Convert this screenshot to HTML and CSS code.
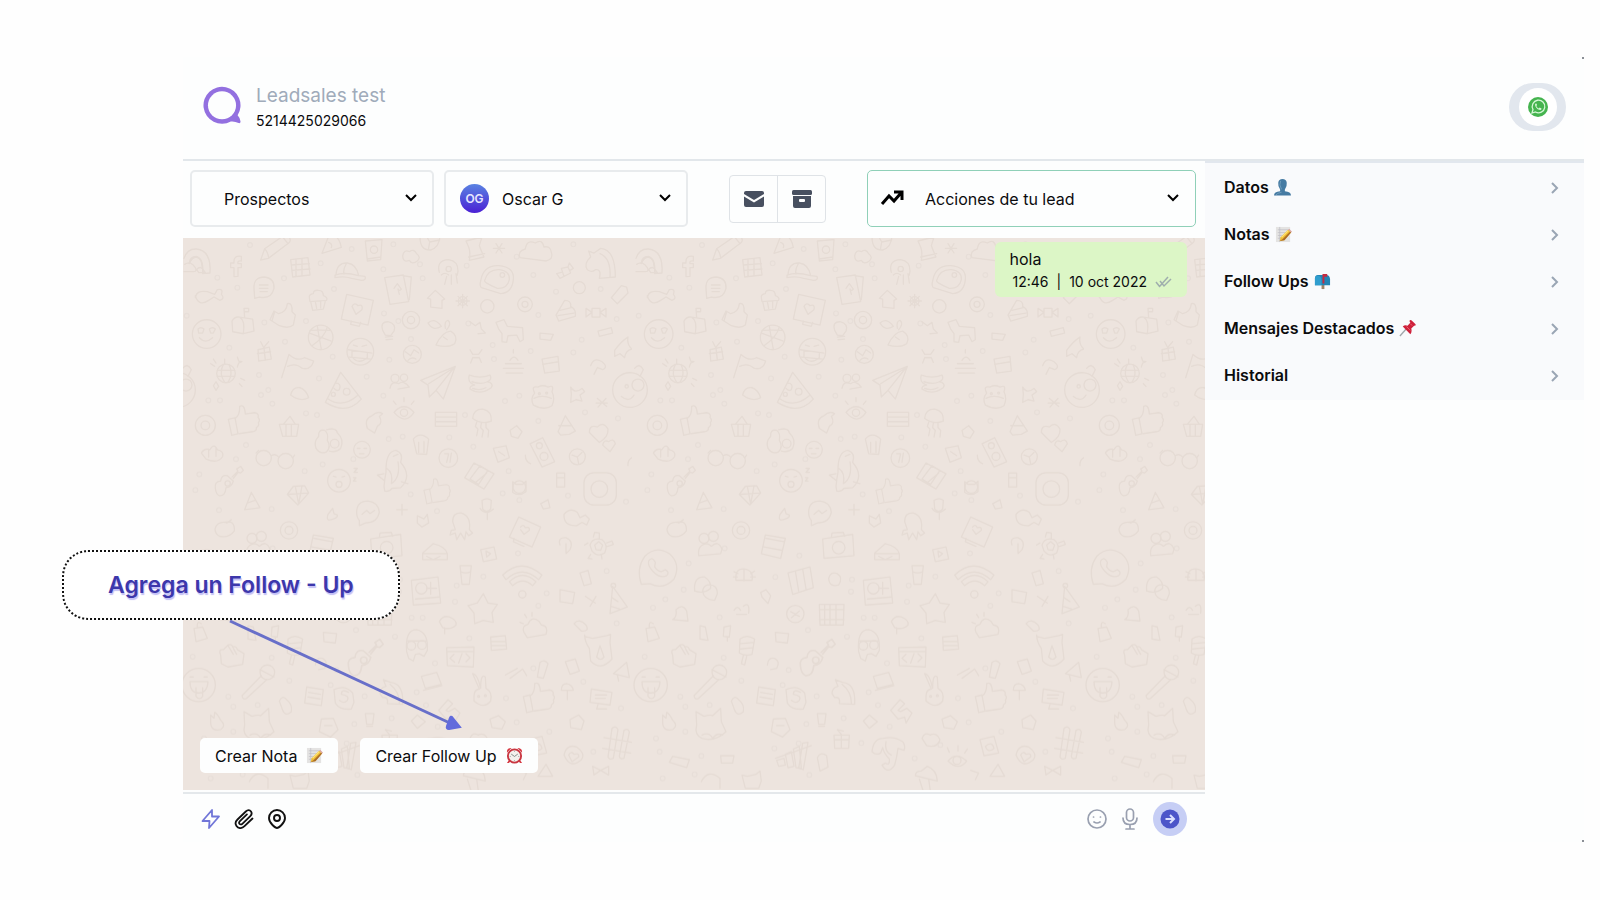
FILE: index.html
```html
<!DOCTYPE html>
<html lang="es">
<head>
<meta charset="utf-8">
<title>Leadsales</title>
<link rel="stylesheet" href="styles.css">
</head>
<body>
<svg class="defs" aria-hidden="true">
  <symbol id="chevron-down" viewBox="0 0 14 10"><path d="M2 2l5 5 5-5"/></symbol>
  <symbol id="chevron-right" viewBox="0 0 10 14"><path d="M2 2l5 5-5 5"/></symbol>
  <symbol id="memo" viewBox="0 0 18 18">
    <path d="M1 1h15v16H1z" fill="#e4e3e2"/>
    <path d="M3 4h11M3 7h10M3 10h6M3 13h4M5 1v16" stroke="#bcbcc2" stroke-width=".7"/>
    <path d="M5 16l1-4 8-8 3 3-7 8z" fill="#edbb32"/>
    <path d="M5 16l5-1 7-8-1-1-8 8z" fill="#a96b29"/>
    <path d="M14 4l1-1 3 3-1 1z" fill="#d9a19b"/>
    <path d="M7 12l7-7" stroke="#ffe374" stroke-width="1.3"/>
  </symbol>
</svg>
<div class="app">
  <header class="header">
    <svg class="logo" viewBox="0 0 40 40" aria-hidden="true"><path d="M35.500 30a19 19 0 1 0-7 6.500q4-.5 8 1.500 2 .5 2-1.500-.5-4-3-6.500z" fill="#9370e0"/><circle cx="19.500" cy="19.800" r="14.400" fill="#fdfefe"/></svg>
    <div class="contact">
      <h1 class="contact-name">Leadsales test</h1>
      <p class="contact-phone">5214425029066</p>
    </div>
    <button class="channel" type="button" aria-label="WhatsApp">
      <span class="channel-disc">
        <svg width="20" height="20" viewBox="0 0 20 20" aria-hidden="true"><circle cx="10" cy="10" r="10" fill="#45b44f"/><path d="M4 16l1-3.500A6.300 6.300 0 1 1 7.500 15z" fill="none" stroke="#d5f7d6" stroke-width="1.300"/><path d="M7.500 6.500q-1 1 0 3 2 3.500 5 3.500 1-.5 1-1.500l-1.800-1-1 1Q9 10.700 8.300 9l.8-1-.7-1.500z" fill="#d5f7d6"/></svg>
      </span>
    </button>
  </header>

  <div class="body">
    <main class="conversation">
      <div class="toolbar">
        <div class="picker">
          <select class="picker-select" aria-label="Etapa"><option>Prospectos</option></select>
          <svg class="picker-chevron"><use href="#chevron-down"/></svg>
        </div>
        <div class="picker">
          <select class="picker-select picker-select-agent" aria-label="Agente"><option>Oscar G</option></select>
          <span class="avatar">OG</span>
          <svg class="picker-chevron"><use href="#chevron-down"/></svg>
        </div>
        <div class="button-group">
          <button class="group-button" type="button" aria-label="Marcar como no leído"><svg width="20" height="16" viewBox="0 0 20 16"><path d="M2 0h16q2 0 2 2v1l-10 6L0 3V2q0-2 2-2z"/><path d="M0 5.500l10 6 10-6V14q0 2-2 2H2q-2 0-2-2z"/></svg></button>
          <button class="group-button" type="button" aria-label="Archivar"><svg width="20" height="18" viewBox="0 0 20 18"><path d="M1.500 0h17Q20 0 20 1.500v2Q20 5 18.500 5h-17Q0 5 0 3.500v-2Q0 0 1.500 0z"/><path fill-rule="evenodd" d="M1 6h18v10q0 2-2 2H3q-2 0-2-2zM8 9q-1 0-1 1v1q0 1 1 1h4q1 0 1-1v-1q0-1-1-1z"/></svg></button>
        </div>
        <div class="picker picker-actions">
          <select class="picker-select picker-select-actions" aria-label="Acciones"><option>Acciones de tu lead</option></select>
          <svg class="trend" viewBox="0 0 24 16" fill="none" stroke="#000" stroke-width="3" aria-hidden="true"><path d="M2 14l7-8 5 5 7-8M14 2h8v8"/></svg>
          <svg class="picker-chevron"><use href="#chevron-down"/></svg>
        </div>
      </div>

      <section class="chat">
        <svg class="wallpaper" aria-hidden="true">
          <defs>
            <path id="d-thumb" d="M-45-5l20-5 9 48-19 5q-4-23-10-48zM-25-7q15-10 14-37 15-8 17 23l28-4q14 2 10 14 8 8 1 16 4 9-6 15 2 9-11 12l-40 6"/>
            <path id="dots" d="M210 30h0M112 128h0M172 158h0M312 130h0M422 85h0M462 162h0M515 42h0M610 103h0M640 28h0M728 130h0M720 88h0M860 92h0M1010 65h0M1060 120h0M1128 170h0M1262 162h0M1310 252h0M1180 28h0M20 242h0M148 338h0M253 262h0M378 258h0M315 320h0M612 235h0M655 258h0M693 312h0M938 330h0M1052 348h0M1075 240h0M1205 314h0M1180 352h0M865 265h0M942 372h0M458 365h0M417 430h0M560 425h0M628 374h0M610 482h0M237 420h0M243 480h0M277 506h0M85 496h0M120 496h0M265 465h0M378 535h0M411 540h0M855 540h0M975 498h0M1018 482h0M1075 558h0M1215 532h0M1314 550h0M626 612h0M668 605h0M808 607h0M880 635h0M168 672h0M198 630h0M374 708h0M428 688h0M58 718h0M46 765h0M117 825h0M275 822h0M692 778h0M771 828h0M968 775h0M1018 795h0M1338 800h0M1164 782h0M986 708h0M520 672h0M170 985h0M278 940h0M502 962h0M155 1064h0M100 1093h0M63 1118h0M263 1147h0M430 1026h0M660 1034h0M657 1070h0M695 1148h0M728 1148h0M830 1052h0M825 1100h0M910 1025h0M1014 955h0M1100 1075h0M1075 1112h0M1310 1165h0M1280 1008h0M645 1205h0M528 1185h0M38 1265h0M275 1268h0M868 1210h0M765 1285h0M470 1305h0M328 1337h0M452 1350h0M145 1385h0M233 1410h0M160 1415h0M554 1384h0M710 1372h0M978 1390h0M738 1411h0M523 1467h0M635 1450h0M773 1475h0M1010 1462h0M1108 1490h0M1323 1420h0M688 1524h0M160 1490h0M72 1510h0M83 1550h0M208 1563h0M427 1540h0M500 1525h0M848 1570h0M925 1530h0M92 1630h0M188 1618h0M532 1620h0M1240 1550h0M1210 1340h0M1060 1300h0"/>
            <pattern id="doodles" width="1356" height="1700" patternUnits="userSpaceOnUse" patternTransform="translate(-3 -3) scale(.3333333)">
              <g class="doodle">
                <use href="#dots" class="dot-rim"/><use href="#dots" class="dot-core"/>
                <path d="M12 70Q22 40 50 42q44 5 40 72l-22 2Q72 72 50 64q-22 0-22 22M28 86q8-20 22-20 16 6 16 28M14 88q18-12 32 10 6 12-6 12H12M50 103q12-12 20 2l6 8H56z"/>
                <path d="M162 125V98h-10V84h10q-2-24 22-20v14q-12-2-10 8h10v12h-10v26zM242 75l12-34 58-40q10-4 17 8 5 10-4 16L265 70zM254 41q10 10 12 28M308 6l16 20M332 74l52-6 6 52-52 6zM348 74v50M366 72v48M334 90l54-4M336 106l54-4"/>
                <path d="M426 55l24-62q28 10 34 44zM446 22q12 4 8 16M556 18l50-4-4 60-40 4zM562 72l40-6M720 5q0 42 32 40 26-8 28-42M735-5l14 26 30-6M749 21l-4 24M668 62q4-20 20-12 14-10 22 6 14 10 2 22-16 12-24-2-20 8-20-14zM468 120q2-38 34-36 28 4 34 38M465 120q30-10 70 2l20 2q4 12-10 12l-30-6q-24-8-50-2zM500 84q-12 20-8 34"/>
                <circle cx="582" cy="44" r="11"/>
                <path d="M858 18l48-12-8 26q6 16 14 34l-44 10q4-24-2-40zM866 66l48-10M1020 68q-8-20 16-26 4-30 30-18 20-14 26 12 20-4 22 16 8 20-16 26zM778 112q-10-36 28-38 28 4 28 34l-2 12M784 120q10-10 22 0M800 124l-6 24M814 120v28M828 116l4 28M940 40h34M948 26l18 28M966 26l-18 28"/><circle cx="806" cy="102" r="8"/>
                <path d="M902 138q8-48 54-46 48 4 44 42-4 40-38 42l-58-18q-6-6-2-20zM914 136q10-34 44-32 32 4 30 30-6 28-36 26-42-18-38-24z"/><circle cx="967" cy="120" r="7"/>
                <path d="M1222 104q-12-18 10-38l-6-18 16 6 20-14q44 4 44 86l-48 4q8-28-12-26-10 10-24 0zM1260 56q34 14 30 72M1294 188l30-36 16 4 4 18-32 32zM1144 100l20-4 8 18-20 10zM1164 96l4-12 12 16-10 6M1144 112l-14 4 10 14 12-6"/>
                <path d="M222 160q-2-34 32-34 30 4 28 34-8 34-44 26l-14 4zM238 150h26M238 160h26M240 170h22M388 188q-2-10 12-12 0-12 16-10 14 0 14 16 14 4 10 14l-50 4zM392 200l6 26 32-4 6-24M406 200l4 20M422 198v20M614 128l56-8 16 80-56 8zM668 122l26 4-6 68M642 160l10-14 12 16q-6 8-10 0l4 16M500 178l80 18-16 74-80-18zM514 258l-2 10 26 6 4-12"/>
                <path d="M516 214q8-14 18-2 16-6 12 12l-18 14zM46 188q4-24 36-18l22 8 8-14q20-4 12 14 12 12-4 18l-18-10-16 10q-30 20-40-14zM158 290l-2-32q8-14 22-12l40 6 4 36-32 8zM180 248q16 8 10 48M194 248l-2-28h14v10h-12M270 254l12-26 14 8q24-6 26-30 16-4 14 24l10 10-6 30q-14 12-42 2zM284 230l-8 28M742 190l24-24 28 26-8 4v24l-34-4v-24z"/>
                <circle cx="80" cy="297" r="43"/><path d="M54 282q8-8 18 0l-4 12h-12zM88 282q10-8 18 0l-6 12h-8zM58 308q18 20 40 0"/>
                <circle cx="422" cy="307" r="37"/><path d="M388 294l66 24M412 272q4 30 12 70M442 276q-8 30-46 56M390 286q30-2 60 0"/>
                <circle cx="541" cy="350" r="40"/><path d="M504 344l72 10M508 366l64 6M520 330l12 4M546 334l14-4M516 346v20q20 24 46 2v-14"/>
                <path d="M608 286q-8-26 16-26 26 6 18 28l-10 14-16-2zM616 306l22-2M618 314l20-2"/><circle cx="693" cy="255" r="26"/><circle cx="693" cy="255" r="11"/><circle cx="697" cy="358" r="27"/><path d="M676 350l16 12 10-18 14 10M684 376q10-12 24-4"/>
                <circle cx="848" cy="198" r="13"/><path d="M828 198h40M848 178v40M834 184l28 28M862 184l-28 28"/><circle cx="1035" cy="208" r="22"/><circle cx="1035" cy="208" r="9"/><circle cx="922" cy="214" r="20"/><circle cx="1198" cy="158" r="18"/>
                <path d="M1128 240l26-44q20 0 18 18 18 10 14 30l-50 14zM1140 226l34-8M1134 242l48-8M1218 220l18 12-18 14zM1236 220h24v26h-24zM1260 232l18-12v26zM1080 294l40 4-8 18-32-4zM1254 288l40-10 4 16-40 10zM870 260l16 12 14-10 4 20 12 12-22 2M870 344l8 14h18l10-14M872 384l6-16h20l6 14M976 386h48M970 400h60M978 414h50M990 376q12-20 24 0M1000 354v-10M1086 372l48-8 4 44-44 6zM1088 388l48-8M1232 392q10-28 34-12 20 16 2 24l-16-6-10 20"/>
                <path d="M744 264q20-18 40 10-26 16-40-10zM796 280q-4-22 8-24 12 10-4 28M768 330q18-40 44-42 24 14 12 38-20 14-56 4M790 306l12 8M948 262l24-8 10 20 46 4 2 36-10 6-10-20-26 2-4 20-14-2v-24l-10-14zM305 428l22-70q24 22 46 10l28 10q-8 28-34 22-20-18-44-6"/>
                <circle cx="138" cy="415" r="28"/><path d="M112 406h52M112 424h52M130 388q-14 28 4 54M148 390q12 28-4 52M134 386v-14M92 386l12 8M100 372l8 12M172 366l4 12 10 2-10 4-4 12M182 430l12 6M178 446l8 8M100 452l8-12 8 14-8 12z"/>
                <path d="M234 344l34-8 6 36-38 6zM232 356l40-6M252 340l4 36M250 336l-8-16M252 336l14-16M332 480q6-26 28-22 18 6 26 30-26 14-54-8z"/>
                <path d="M482 412l62 80q-44 50-108 10zM442 490q44 32 90-8M466 444q20 0 12 20-8 6-16-4"/><circle cx="500" cy="470" r="10"/><circle cx="460" cy="478" r="6"/>
                <circle cx="645" cy="430" r="12"/><circle cx="672" cy="428" r="11"/><path d="M630 460q4-24 26-14 14-12 32 10l-34 6M722 436l104-42-36 98-22-26-20 20-4-36zM822 398l-76 48M822 398l-54 68M868 420q32 12 62 0 8 14-8 20 20 4 12 18-34 24-64 4-2-10 14-12-24-8-16-30zM876 440q28 10 46 0M878 460q20 8 40-2"/>
                <path d="M1060 510q-10-20 4-36-12-22 10-18 14-8 30 0 20-8 12 14 10 20 0 42-22 16-56-2zM1062 490q24-12 52 0"/><circle cx="1078" cy="476" r="3"/><circle cx="1100" cy="474" r="3"/>
                <path d="M1172 456q12 22 34 4l8 10-14 10 6 18-18-4-16 8 2-24zM1252 490l28 24M1278 490l-24 26M1248 504h34M1304 346q20-28 40-40-4 24 12 36-20 4-22 26l-14-12-16 8z"/>
                <g id="d-monkey"><circle cx="1350" cy="465" r="52"/><path d="M1324 484q24 20 38-4M1364 400q14-18 26 4l-10 20"/><circle cx="1340" cy="454" r="5"/><circle cx="1374" cy="450" r="18"/></g><use href="#d-monkey" x="-1356"/>
                <use href="#d-thumb" x="190" y="558"/><g transform="translate(770 770) scale(.85)"><use href="#d-thumb"/></g><use href="#d-thumb" x="1075" y="1390"/>
                <circle cx="76" cy="571" r="30"/><circle cx="76" cy="571" r="13"/>
                <path d="M298 568h58l-6 36h-42zM310 568l20-24 16 24M318 570v32M334 570v32M408 640q-8-20 8-36-2-22 18-18 12 8 8 30 12 20-2 34-20 10-32-10zM440 584q30-8 32 10 22 20 10 46-14 14-34 8"/><circle cx="464" cy="626" r="13"/>
                <path d="M642 532q30-34 60 0-26 40-60 0zM648 508l-8-10M672 500v-12M694 508l8-10M766 532h64v42h-64zM766 546h64M766 560h64M878 550q2-28 30-28 28 6 26 36-28 12-56-8zM890 562l-4 12 8 8-4 20M904 564l-2 14 8 8-4 20M918 564v14l8 8-2 20M700 612q20-24 46 0l-6 46-30-2zM716 622v30M732 620v32M562 580q-10-30 14-38 16-16 32-6l-10 8q12 20-6 30l-8 20z"/><circle cx="672" cy="533" r="11"/>
                <circle cx="251" cy="669" r="23"/><circle cx="317" cy="678" r="23"/><path d="M274 662q12-8 22 4M228 654l8-8M338 668l6-8M64 654q10-16 26-10 12-22 22 0 20 4 16 20-14 24-50 8zM86 642v24M108 640v24"/>
                <circle cx="546" cy="644" r="25"/><path d="M532 640h8M552 640h8M538 656h14M940 640l38-8 10 36-34 14zM956 650l18 12"/><circle cx="1192" cy="665" r="24"/><path d="M1176 660l16 6 14-14M1192 666l4 20"/>
                <g id="d-guitar"><path d="M106 760q-4-20 16-22 2-20 20-16l18 16q-4 18-22 20-2 26-20 24-10-4-12-22zM156 726l18-18-4-6 12-8 8 12-8 8-8-2-14 18"/><circle cx="143" cy="745" r="8"/></g><g transform="translate(374 352) scale(1.24)"><use href="#d-guitar"/></g>
                <circle cx="477" cy="737" r="34"/><circle cx="477" cy="748" r="9"/><path d="M460 724l8 2M486 726l8-2M522 700h10l-10 12h10M520 728h8l-8 10h8M322 778l18-24 34-2 12 22-32 36zM324 778l62-4M346 754l10 54 10-56"/>
                <path d="M612 754q2-22 6-42-2-62 30-66 24 10 14 36 36 42 0 76l-26 2q-8 12-22 8zM612 716l-20 4 20 16M620 700q20 12 14 46 28-18 20-66M640 664l14-6M664 740l20 6"/>
                <path d="M530 832q0-34 34-34 32 4 34 34-6 32-42 32l-18 8v-16q-8-8-8-24zM546 838l14-12 10 10 14-10M854 728l28-44 60 32-30 46zM870 732l30-40 24 14-28 42zM884 744l36-30"/>
                <circle cx="805" cy="669" r="28"/><path d="M794 656h12l-6 26M814 654l-4 28M1050 626l38-18 36 72-38 16zM1036 660q0 20 16 26"/><circle cx="1078" cy="632" r="9"/><circle cx="1092" cy="664" r="12"/>
                <path d="M1228 592q0-24 24-16 18-18 32 6 2 24-26 40zM1268 630q4-18 18-10 16-12 20 6l-16 24zM1134 590l22-48 30 46-18 10-26 2zM1136 572h40M906 796q16-10 28 0l-2 26q-12 14-24 0zM900 820q16 24 40 2M922 836v18"/>
                <path d="M998 740l10 8h20l10-10v32q-20 16-40 2zM1130 714h24v42h-24zM1130 728h24M1082 806l22-12 6 24-20 4zM1344 692q-2-20 16-26M712 842l20 10 10-14 4 26-20 12-14-12zM650 824h32M666 808v32M990 586l20-14 16 18-12 20-20-6z"/><circle cx="1018" cy="756" r="19"/>
                <rect x="1212" y="713" width="97" height="97" rx="30"/><circle cx="1258" cy="762" r="25"/>
                <path d="M818 860q0-28 26-26 30 10 24 50l10 10-12 8-8-12-4 24-12-20-12 20-4-20-16 6 4-14 12-2zM1016 846l66 30-26 60-68-30zM1002 910l-2 10 32 14M1022 876q8-10 14 2 14-4 12 8l-16 12-10-14M1152 838q18-22 40-6l8 16 16-8 12 12-8 18-14-8-16 10q-40 2-38-34zM194 824l20-52 26 46zM202 804l24-8M460 852q-24 10-16-14l14-18 4 16 10 4q2 8-12 12"/>
                <path d="M105 882q6-22 30-20 30-8 28 26-16 22-44 16-14-8-14-22M140 864l14-10"/><circle cx="327" cy="886" r="26"/><circle cx="327" cy="886" r="12"/>
                <circle cx="216" cy="910" r="15"/><circle cx="244" cy="904" r="15"/><path d="M200 962q-4-34 26-36 10 4 12 8 20-20 32 8l-4 14zM388 956l12-56 60 10-14 60zM402 910l54 10M396 936l54 10M572 912l90-14 4 64-90 8zM598 908l2-14 34-2 4 12"/><circle cx="620" cy="938" r="19"/>
                <path d="M728 954l32-28q36 8 42 30v18h-74zM728 956h74M740 964l20 10 20-10M902 944l40-8 8 36-40 8zM918 948l14 8-12 10zM1230 930q8-24 36-16 20 16 8 40-22 14-38-6zM1240 906l4-14 14 2v16M1224 924l-10 6M1280 924l16-6 4 10-18 6M1232 958l-8 12 12 2M1264 960l2 12M1244 930l12-10 12 10-6 16-14-2z"/>
                <path d="M28 1048q-16-48 10-84 34-34 74-8 36 32 14 76-32 34-72 14z"/><path d="M50 978q10-16 20 4l-2 14q10 14 20 14l12-6q14 8 4 18-20 10-42-14-16-18-12-30zM188 1068q-4-44 30-42 20 12 18 34-20 18-48 8M226 1050q30-4 30 26l-8 20q-34-2-36-28 2-14 14-18zM312 1036q-4-36 24-34 30 4 24 34zM336 1004v34M306 1010l12 6M304 1026h12M368 1008l-12 8M370 1026h-14M468 1014l66-18 10 62-62 20zM490 1008l10 60M512 1002l10 60"/>
                <path d="M122 1154q14-8 10-30 20-20 32 4l4 30zM562 1108h74l-2 62h-70zM578 1108v62M594 1108v62M612 1108v62M562 1124h74M562 1154h74M694 1036l80-10 8 78-82 6zM706 1092l72-6M752 1042v36M740 1060h30M840 992h34l-6 56h-22zM842 1010q16 8 30 0M968 1020q56-54 118 0l-10 14q-50-46-98 0zM988 1040q40-38 80 0l-10 12q-30-28-60 0z"/><circle cx="724" cy="1060" r="17"/><circle cx="490" cy="1137" r="26"/><path d="M476 1130l26 14M478 1148l24-20"/><circle cx="1027" cy="1078" r="11"/>
                <path d="M910 1076l14 28 28 4-16 24 4 30-30-6-26 10-2-32-18-22 28-8zM1290 1136l8-82 44 62zM1294 1114l24 8M1296 1088l18 12"/><circle cx="1300" cy="1052" r="7"/>
                <path d="M590 1030q6-22 26-14 18 12 4 34-28 8-30-20zM386 1072l16-8 14 18-8 24-18-20zM306 1126q10-18 20 0M334 1114q20-16 16 20M314 1138h30M1140 930q-8-24 18-22 24 10 12 36l-12 12M1158 926v26M430 1192l40 4-4 28-34-4zM932 1206l44-4 4 40-46 4zM934 1220h44M936 1232h42M204 1172l16 4 8 40-24-4zM276 1176l20-4-4 34-18-2zM286 1208v10M406 1290q2-24 22-20 18 10 6 30l-18 4M1182 1166q16-18 36 4 12 20-14 18z"/>
                <path d="M1032 1192q-8-20 12-24 10-26 32-10l8 12q22 2 14 28l-56 10zM1030 1166l-10-4M1040 1148l-6-10M1056 1144v-12M778 1160q10-20 30-14 24 10 20 24-16 16-40 8zM794 1178v18"/>
                <path d="M680 1250q-6-66 30-66 36 8 32 62l-10 18-14-8-12 2-6 20-14-8zM684 1218h54"/><circle cx="694" cy="1232" r="13"/><circle cx="726" cy="1230" r="13"/><path d="M1214 1204l24 6 42-8 12-4-2 24 6 50q-34 38-64 6l-4-38q-14-20-14-40zM1250 1266l10-34 12 34q-10 14-22 0zM800 1238l82-2-2 60-78-4zM800 1250h82M822 1258l-12 12 14 12M858 1256l12 12-12 12M846 1256l-10 28"/>
                <path d="M324 1212q20-16 44 0l-8 46q-20 6-38-4zM326 1226l40-4M326 1242l38-4M334 1262l-6 24 10 4 6-26M122 1260q-8-18 8-16l14-14q12-4 14 6 12-4 14 8l20 12-4 32-44 8-20-10zM144 1232l16 26M160 1240l10 18"/>
                <circle cx="56" cy="1350" r="50"/><path d="M30 1326h10M72 1326h10M30 1340h54q-2 34-28 34t-26-34zM48 1358v26q10 14 20 0v-26"/>
                <circle cx="262" cy="1312" r="22"/><path d="M244 1322l-58 60q2 14 14 8l60-56M240 1304l42 22M42 1180l26-4 14 34-34 10zM52 1178q-2-24 12-12M380 1356l50 8-6 48-50-8zM386 1372l36 6M384 1386l36 6M462 1364q34-16 56 10l4 28-8 20q-34 4-48-18zM506 1372q-22-12-22 6 26 4 18 18-10 12-24 0"/>
                <path d="M600 1376q0-18 18-22l-8-20 22 8q40 4 36 66l-46-2q4-22-14-18zM630 1348q28 22 28 56M724 1324l46-12 14 36-48 12zM730 1366l56-14M882 1384q0-20 16-22l-20-46q14 0 24 44 0-46 14-34l2 34q20 10 14 38-20 26-50 0z"/><circle cx="896" cy="1384" r="3"/><circle cx="916" cy="1382" r="3"/>
                <path d="M1234 1362l62 10-6 38-60-8zM1246 1380h34M1246 1390h30M1254 1408l-4 14h30M1180 1366h-36q0-20 16-20 18 4 20 20M1162 1366v28M1072 1326l8-44q14-10 24 4l-14 44zM1156 1280l30-8 12 36-28 10zM298 1398q10-20 22-4 18 14 14 36-18 16-26-4zM776 1426l28-32 14 12-20 20 8 4 18-10 16 14-18 30 -4-18-20 6z"/>
                <path d="M192 1430l24 14q20-6 26-2l24-22 2 40 14 30q-34 32-72 20-24-10-16-40zM210 1500q22-10 32 10 12-18 30-10M92 1440l10 10 2-18q10 6 18 24 18 16 0 28-30 6-30-22zM418 1490l6-38 36-2 14 34-22 22zM434 1472h22M694 1458l18-18 24 20-24 20zM606 1500h46l-2 40h-42zM606 1514h44M628 1500v38M628 1498l-12-14 18 4M556 1436h26l-4 32h-18zM560 1474h18M930 1452l26-10 20 18-10 22-30-4z"/>
                <path d="M720 1550q4-40 34-40 32-8 58 10 10 14 4 26l-18-6q-4 30-10 50-20 30-38 0l10-6q14 10 12-12-16-16-20-34l-6 16q-14 8-26-4M762 1520q-6 30 16 40M434 1576l22-6 4 20-20 4zM460 1558l18-8 8 44-18 4zM484 1542l18-8 6 66-16-2zM512 1524l16-2-14 82-14-4zM430 1570q60-20 108-38M948 1578q24-30 56 0-24 32-56 0zM952 1552l-6-14M978 1548v-16M998 1554l8-12M556 1568q10-20 28-6l4 34-24 12zM266 1562h40l-4 22h-34z"/><circle cx="975" cy="1576" r="12"/>
                <path d="M1044 1514l42-10 14 50-44 8zM1060 1534q20-18 26 6-18 16-26-6M1152 1560q8-34 38-24 28 20 14 38-34 30-52-14zM1166 1560q8-14 16-2 16-6 14 8l-20 14zM1238 1594l24 12-20 14zM1262 1606l24-12v26zM1296 1480q12-10 18 4l-14 86q-12 6-16-4zM1332 1486q14-8 16 6l-16 78q-12 4-14-6zM1272 1508l84 14M1268 1540l84 14M1074 1624l24-36 20 36z"/>
                <path d="M850 1622q0-14 18-14l18-14q28 10 30 44zM862 1632l14 44M890 1632l6 44M112 1582l10-18 50 10-8 24zM330 1620l16 4 26-6 12-10 4 30-8 22h-40zM870 1510q8-20 24-10 20-10 30 14-8 26-40 18zM1300 1316l40-34 8 46zM1312 1320l4 18M1170 1454l26-14 16 18-8 26-32-6zM976 1320l36-20M990 1330l38-28 12 20M1140 1064l44 8-6 34-38-6zM1200 1014l24-8 10 40-22 6zM208 1640q20-40 56-10v30M1016 1606l24 8-10 20M1216 1084l30 20M1230 1114l18-30"/>
              </g>
            </pattern>
          </defs>
          <rect width="100%" height="100%" fill="url(#doodles)"/>
        </svg>

        <article class="message">
          <p class="message-text">hola</p>
          <p class="message-meta"><time>12:46</time><span>|</span><time datetime="2022-10-10">10 oct 2022</time>
            <svg width="17" height="12" viewBox="0 0 17 12" fill="none" stroke="#9faead" stroke-width="1.500" aria-label="Entregado"><path d="M1 6l4 5M5 5l4 5 7-7M5 10l8-9"/></svg></p>
        </article>

        <div class="quick-actions">
          <button class="quick-button" type="button">Crear Nota <svg class="emoji"><use href="#memo"/></svg></button>
          <button class="quick-button" type="button">Crear Follow Up
            <svg class="emoji" viewBox="0 0 18 18"><path d="M1 5q0-4 5-4L1 6zM17 5q0-4-5-4l5 5zM3 14l-2 3h2l2-2zM15 14l2 3h-2l-2-2z" fill="#d63842"/><circle cx="9" cy="9.500" r="7" fill="#f4f2ed" stroke="#c93641" stroke-width="2"/><path d="M5.500 7.500L9 10l3.500-2.500" fill="none" stroke="#64706c" stroke-width=".8"/><path d="M9 4v1M9 14v1M4 10h1M13 10h1" stroke="#999"/></svg></button>
        </div>

        <svg class="pointer" width="236" height="116" viewBox="0 0 236 116" aria-hidden="true"><path d="M2 2l222 103" stroke="#686fc9" stroke-width="3"/><path d="M224 98l8 10-11 2q-3 0-2-3l3-8q1-2 2-1z" fill="#626bdc" stroke="#626bdc" stroke-width="2"/></svg>
        <p class="callout">Agrega un Follow - Up</p>
      </section>

      <footer class="composer">
        <button class="icon-button" type="button" aria-label="Respuestas rápidas"><svg width="20" height="20" viewBox="0 0 20 20" fill="none" stroke="#7176d8" stroke-width="1.800" stroke-linejoin="round"><path d="M11 1l-9.500 11h7L8 19l10-11.500h-7z"/></svg></button>
        <button class="icon-button" type="button" aria-label="Adjuntar archivo"><svg width="20" height="20" viewBox="0 0 20 20" fill="none" stroke="#111" stroke-width="1.800" stroke-linecap="round"><path d="M18.500 9.500l-8 7.700c-3 2.800-6.300 2.400-8-.2-1.700-2.500-.8-4.800 1-6.500l8.300-8c2-1.900 4-1.600 5.200 0 1.200 1.700.6 3.300-.7 4.600l-8 7.700c-1 1-2.200.8-2.900-.1-.7-1-.2-1.900.5-2.600l7-6.700"/></svg></button>
        <button class="icon-button" type="button" aria-label="Ubicación"><svg width="20" height="20" viewBox="0 0 20 20" fill="none" stroke="#111" stroke-width="1.900"><path d="M10 19q-1.500 0-4.500-3Q2 12.500 2 9a8 8 0 0 1 16 0q0 3.500-3.500 7-3 3-4.500 3z"/><circle cx="10" cy="9" r="3"/></svg></button>
        <input class="composer-input" type="text" aria-label="Mensaje">
        <button class="icon-button" type="button" aria-label="Emojis"><svg width="20" height="20" viewBox="0 0 20 20" fill="none" stroke="#99a0b0" stroke-width="1.700" stroke-linecap="round"><circle cx="10" cy="10" r="9"/><path d="M6.500 8h.1M13.400 8h.1M7 13q3 2 6 0"/></svg></button>
        <button class="icon-button" type="button" aria-label="Grabar audio"><svg width="20" height="22" viewBox="0 0 20 22" fill="none" stroke="#99a0b0" stroke-width="1.700" stroke-linecap="round"><rect x="6.500" y="1" width="7" height="12" rx="3.500"/><path d="M3 10q0 6.500 7 6.500t7-6.500M10 17v4M6 21h8"/></svg></button>
        <button class="send" type="button" aria-label="Enviar"><svg width="20" height="20" viewBox="0 0 20 20"><circle cx="10" cy="10" r="9.500" fill="#4c55c9"/><path d="M5.500 10h8M10 6l4 4-4 4" fill="none" stroke="#dbe0ff" stroke-width="2"/></svg></button>
      </footer>
    </main>

    <aside class="details">
      <button class="details-row" type="button">Datos <svg class="emoji" viewBox="0 0 18 18"><path d="M0 17.500q0-4 6.500-4.500v-2Q4 8 4.500 4q.5-4 4.500-4t4.500 4q.5 4-2 7v2q6.500.5 6.500 4.500z" fill="#467ba3"/><path d="M7 2q-2 4 1 9M2 17q1-2 6-3" stroke="#719dbc" fill="none"/></svg><svg class="row-chevron"><use href="#chevron-right"/></svg></button>
      <button class="details-row" type="button">Notas <svg class="emoji"><use href="#memo"/></svg><svg class="row-chevron"><use href="#chevron-right"/></svg></button>
      <button class="details-row" type="button">Follow Ups <svg class="emoji" viewBox="0 0 18 18"><path d="M8 12h3v5H8z" fill="#a08368"/><path d="M4 2h9q4 0 4 5v6H1V6q0-4 3-4z" fill="#2384b4"/><path d="M4 3q4 0 4 5v5H1V6q0-3 3-3z" fill="#2f9dce"/><path d="M9 1h5v3h-3v7H9z" fill="#c72a40"/></svg><svg class="row-chevron"><use href="#chevron-right"/></svg></button>
      <button class="details-row" type="button">Mensajes Destacados <svg class="emoji" viewBox="0 0 18 18"><path d="M1 17l7-8" stroke="#a0a6aa" stroke-width="1.400"/><path d="M11 1q1-2 3 0l3 3q2 2-1 2l-3 3q1 4-1 6L4 7q2-2 5-1l3-3z" fill="#ce203a"/><path d="M8 7l4 4M12 4l2 2" stroke="#ef6273"/></svg><svg class="row-chevron"><use href="#chevron-right"/></svg></button>
      <button class="details-row" type="button">Historial <svg class="row-chevron"><use href="#chevron-right"/></svg></button>
    </aside>
  </div>
</div>
</body>
</html>
```
FILE: styles.css
```css
* { box-sizing: border-box; }
body {
  margin: 0;
  min-height: 100vh;
  display: flex;
  padding: 57px 16px 58px 183px;
  background: #fefefe;
  color: #0b0b0d;
  font-family: Inter, "Liberation Sans", sans-serif;
  font-size: 16px;
}
button, select, input { font: inherit; color: inherit; }
button { padding: 0; border: 0; background: none; cursor: pointer; }
h1, p { margin: 0; font-weight: 400; }
svg { flex: none; display: block; }
.defs { position: absolute; width: 0; height: 0; }

.app { position: relative; flex: 1; min-width: 0; display: flex; flex-direction: column; background: #fdfefe; }
.app::before, .app::after { content: ""; position: absolute; right: 0; width: 2px; height: 2px; background: #8b8f96; }
.app::before { top: 0; }
.app::after { bottom: 0; }

.header {
  display: flex;
  align-items: center;
  gap: 14px;
  padding: 25px 18px 27px 20px;
  border-bottom: 2px solid #e2e7eb;
}
.logo { width: 39px; height: 39px; margin-bottom: 4px; }
.contact { flex: 1; }
.contact-name { color: #a0abba; font-size: 19px; line-height: 28px; }
.contact-phone { font-size: 14px; line-height: 22px; }
.channel {
  width: 57px;
  height: 48px;
  display: grid;
  place-items: center;
  border-radius: 24px;
  background: #e2e7ee;
}
.channel-disc { width: 38px; height: 38px; display: grid; place-items: center; border-radius: 50%; background: #fff; }

.body { flex: 1; display: grid; grid-template-columns: minmax(0, 1fr) 379px; }
.conversation { display: flex; flex-direction: column; min-width: 0; }
.toolbar {
  display: grid;
  grid-template-columns: 244fr 244fr auto 329fr;
  align-items: center;
  gap: 10px;
  padding: 9px 9px 11px 7px;
}
.picker { position: relative; }
.picker-select {
  display: block;
  width: 100%;
  height: 57px;
  padding: 0 48px 0 32px;
  appearance: none;
  border: 2px solid #e8ebed;
  border-radius: 5px;
  background: #fdfefe;
}
.picker-select-agent { padding-left: 56px; }
.picker-select-actions { padding-left: 57px; border: 1px solid #8fd0b8; }
.picker-chevron {
  position: absolute;
  right: 16px;
  top: 23px;
  width: 14px;
  height: 10px;
  fill: none;
  stroke: #000;
  stroke-width: 2;
  pointer-events: none;
}
.avatar {
  position: absolute;
  left: 16px;
  top: 14px;
  width: 29px;
  height: 29px;
  border-radius: 50%;
  background: linear-gradient(#5a83e2, #4a20d4);
  color: #e6e7ff;
  font-size: 12px;
  font-weight: 600;
  line-height: 29px;
  text-align: center;
}
.trend { position: absolute; left: 13px; top: 20px; width: 24px; height: 16px; }
.button-group { display: flex; margin: 0 31px; border: 1px solid #dfe3e7; border-radius: 4px; }
.group-button { width: 47px; height: 46px; display: grid; place-items: center; fill: #485060; }
.group-button + .group-button { width: 48px; border-left: 1px solid #dfe3e7; }

.chat {
  position: relative;
  flex: 1;
  min-height: 400px;
  display: flex;
  flex-direction: column;
  justify-content: space-between;
  align-items: flex-end;
  padding: 4px 18px 17px 17px;
  background: #ede4de;
}
.wallpaper { position: absolute; inset: 0; width: 100%; height: 100%; }
.doodle { fill: none; stroke: #e5dbd4; stroke-width: 4; stroke-linecap: round; stroke-linejoin: round; }
.dot-rim { stroke: #e7ded8; stroke-width: 18; }
.dot-core { stroke: #ede4de; stroke-width: 11; }
.message { position: relative; padding: 5px 15px; border-radius: 6px; background: #dcf6c6; }
.message-text { line-height: 24px; }
.message-meta { display: flex; align-items: center; gap: 8px; padding-left: 3px; font-size: 14px; line-height: 21px; }
.quick-actions { position: relative; align-self: stretch; display: flex; gap: 22px; }
.quick-button {
  height: 35px;
  display: flex;
  align-items: center;
  gap: 9px;
  padding: 0 15px;
  border-radius: 5px;
  background: #fdfefe;
}
.emoji { width: 17px; height: 17px; }
.callout {
  position: absolute;
  left: -121px;
  bottom: 170px;
  padding: 17px 44px;
  border: 2px dotted #111;
  border-radius: 26px;
  background: #fff;
  color: #3d37ab;
  font-size: 23px;
  font-weight: 600;
  line-height: 32px;
  text-shadow: 1px 2px 1px #c3bff5;
  white-space: nowrap;
}
.pointer { position: absolute; left: 45px; bottom: 55px; fill: none; }

.composer {
  display: flex;
  align-items: center;
  gap: 13px;
  margin-top: 2px;
  padding: 8px 18px 6px;
  border-top: 2px solid #e4e8eb;
}
.icon-button { width: 20px; display: grid; place-items: center; }
.composer-input { flex: 1; min-width: 0; height: 32px; padding: 0; border: 0; outline: 0; background: transparent; }
.send { width: 34px; height: 34px; display: grid; place-items: center; border-radius: 50%; background: #c6cef5; }

.details {
  align-self: start;
  display: flex;
  flex-direction: column;
  padding: 1px 0;
  border-top: 2px solid #e2e7ee;
  background: #f9fafc;
}
.details-row {
  display: flex;
  align-items: center;
  gap: 5px;
  padding: 12px 24px 12px 19px;
  font-weight: 600;
  line-height: 23px;
}
.row-chevron { width: 10px; height: 14px; margin-left: auto; fill: none; stroke: #9aa5b4; stroke-width: 2; }
```
